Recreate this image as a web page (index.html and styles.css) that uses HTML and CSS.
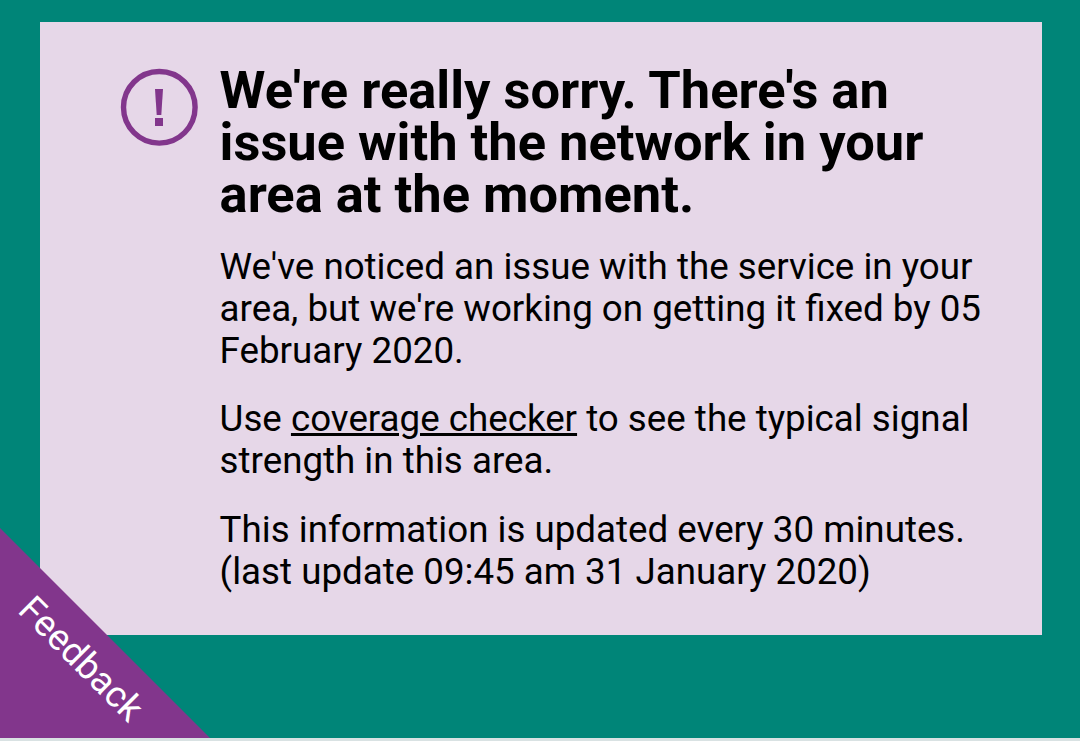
FILE: index.html
```
<!DOCTYPE html>
<html lang="en">

<head>
    <meta charset="UTF-8">
    <meta name="viewport" content="width=device-width, initial-scale=1.0">
    <title>Network status</title>
    <link rel="stylesheet" href="styles.css">
</head>

<body>
    <main class="status">
        <section class="card">
            <svg class="icon" viewBox="0 0 78 78" aria-hidden="true">
                <circle cx="39.3" cy="39.3" r="35.8" fill="none" stroke="#82368c" stroke-width="5.4" />
                <path d="M35 21h8l-1.7 26h-4.6z" fill="#82368c" />
                <rect x="35" y="50" width="8" height="8" fill="#82368c" />
            </svg>
            <div class="message">
                <h1>We're really sorry. There's an<br>issue with the network in your<br>area at the moment.</h1>
                <p>We've noticed an issue with the service in your<br>area, but we're working on getting it fixed by 05<br>February 2020.</p>
                <p>Use <a href="#">coverage checker</a> to see the typical signal<br>strength in this area.</p>
                <p>This information is updated every 30 minutes.<br>(last update 09:45 am 31 January 2020)</p>
            </div>
        </section>
        <a class="feedback" href="#"><span>Feedback</span></a>
    </main>
</body>

</html>
```
FILE: styles.css
```
html,
body {
    height: 100%;
}

body {
    margin: 0;
    background-color: #fff;
    color: #000;
    font-family: Roboto, sans-serif;
    overflow: hidden;
}

.status {
    position: relative;
    height: 741px;
    padding: 22px 38px 0 40px;
    box-sizing: border-box;
    background-color: #008578;
    border-bottom: 3px solid #d9e2e3;
}

.card {
    display: flex;
    height: 613px;
    padding: 42px 0 0 80px;
    box-sizing: border-box;
    background-color: #e6d7e8;
}

.icon {
    flex: none;
    width: 78px;
    height: 78px;
    margin: 4px 21.6px 0 0;
}

.message {
    white-space: nowrap;
}

h1 {
    margin: 0 0 26px;
    font-size: 52.45px;
    line-height: 52px;
}

p {
    margin: 0 0 26px;
    font-size: 36.73px;
    line-height: 42px;
}

p:last-child {
    padding-top: 1px;
}

a {
    color: inherit;
    text-decoration-thickness: 3px;
}

.feedback {
    position: absolute;
    left: 0;
    bottom: 0;
    width: 210px;
    height: 210px;
    background-color: #82368c;
    clip-path: polygon(0 0, 100% 100%, 0 100%);
    color: #fff;
    font-size: 36.8px;
    line-height: 42px;
    text-decoration: none;
}

.feedback span {
    position: absolute;
    left: 81px;
    top: 131px;
    transform: translate(-50%, -50%) rotate(45deg);
}
```
